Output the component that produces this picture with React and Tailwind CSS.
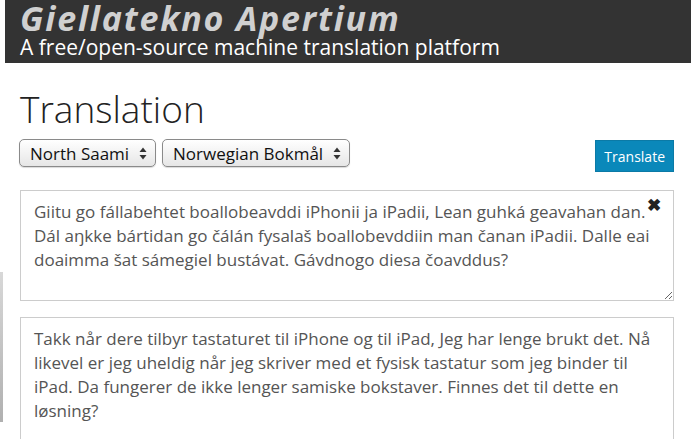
import React from "react";

const font = { fontFamily: '"Open Sans", "Liberation Sans", sans-serif' };

const FakeSelect = ({ label, width }) => (
  <div
    className={`flex items-center justify-between h-[28px] ${width} pl-[10px] pr-[8px] rounded-[5px] border border-[#8a8a8a] bg-gradient-to-b from-[#ffffff] to-[#e6e6e6] text-[17px] text-[#111] shadow-[0_1px_1px_rgba(0,0,0,0.15)]`}
  >
    <span className="leading-none">{label}</span>
    <svg width="8" height="13" viewBox="0 0 8 13" className="ml-2">
      <path d="M4 0.5 L7.5 5 L0.5 5 Z" fill="#333" />
      <path d="M4 12.5 L7.5 8 L0.5 8 Z" fill="#333" />
    </svg>
  </div>
);

export default function App() {
  return (
    <div className="relative w-[691px] h-[439px] overflow-hidden bg-white" style={font}>
      {/* header */}
      <div className="ml-[5px] h-[63px] bg-[#333333] pl-[15px]">
        <div className="text-[34px] font-bold italic leading-[36px] text-[#d0d0d0] tracking-[1.8px] whitespace-nowrap">
          Giellatekno Apertium
        </div>
        <div className="text-[21px] leading-[22px] text-white whitespace-nowrap">
          A free/open-source machine translation platform
        </div>
      </div>

      <div className="px-[20px]">
        <h1 className="mt-[24px] text-[37px] font-light leading-[44px] text-[#222]">Translation</h1>

        <div className="mt-[8px] flex items-start justify-between">
          <div className="flex gap-[6px] -ml-[1px]">
            <FakeSelect label="North Saami" width="w-[137px]" />
            <FakeSelect label="Norwegian Bokmål" width="w-[188px]" />
          </div>
          <button className="mr-[-3px] mt-[1px] h-[32px] px-[8px] bg-[#0a88ba] border border-[#0b7aa6] text-white text-[14px]">
            Translate
          </button>
        </div>

        <div className="relative mt-[18px]">
          <textarea
            readOnly
            className="block w-[654px] h-[111px] border border-[#cccccc] pl-[13px] pr-[8px] pt-[9px] text-[17px] leading-[24px] text-[#555] outline-none"
            defaultValue="Giitu go fállabehtet boallobeavddi iPhonii ja iPadii, Lean guhká geavahan dan. Dál aŋkke bártidan go čálán fysalaš boallobevddiin man čanan iPadii. Dalle eai doaimma šat sámegiel bustávat. Gávdnogo diesa čoavddus?"
          />
          <span className="absolute right-[10px] top-[6px] text-[17px] font-bold leading-none text-[#222]">✖</span>
        </div>

        <div className="mt-[16px] w-[654px] h-[140px] border border-[#cccccc] pl-[13px] pr-[14px] pt-[9px] text-[17px] leading-[24px] text-[#555]">
          Takk når dere tilbyr tastaturet til iPhone og til iPad, Jeg har lenge brukt det. Nå likevel er jeg uheldig når jeg skriver med et fysisk tastatur som jeg binder til iPad. Da fungerer de ikke lenger samiske bokstaver. Finnes det til dette en løsning?
        </div>
      </div>

      {/* window edge artefact */}
      <div className="absolute left-0 top-[272px] w-[3px] h-[150px] bg-gradient-to-b from-[#d8d8d8] via-[#c4c4c4] to-[#b0b0b0]" />
    </div>
  );
}
